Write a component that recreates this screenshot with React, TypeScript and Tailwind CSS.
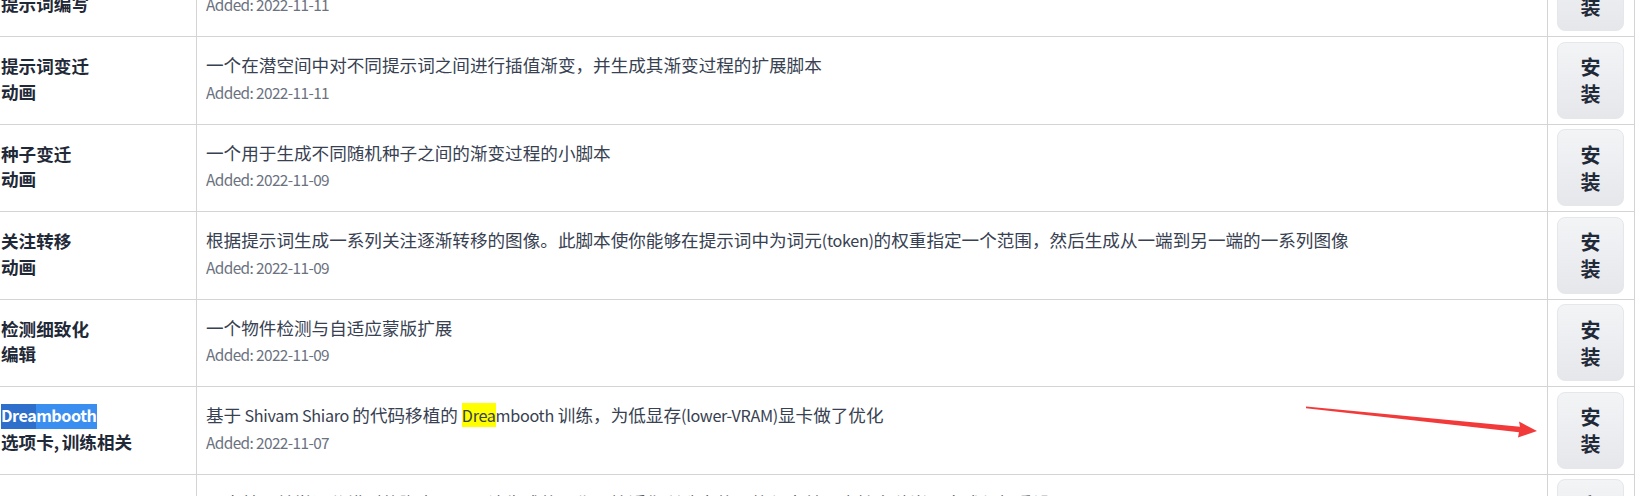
import React from "react";

type Row = {
  name: React.ReactNode;
  tags: React.ReactNode;
  desc: React.ReactNode;
  added: string;
};

// Latin runs are drawn a bit narrower so they match the reference's Source Sans widths
const L = ({ children, bold = false }: { children: React.ReactNode; bold?: boolean }) => (
  <span className={bold ? "text-[0.92em] tracking-[-0.03em]" : "text-[0.92em] tracking-[-0.02em]"}>{children}</span>
);

const ROWS: Row[] = [
  {
    name: "提示词矩阵",
    tags: "提示词编写",
    desc: "将多个提示词组合成网格图像，便于比较不同提示词的效果",
    added: "2022-11-11",
  },
  {
    name: "提示词变迁",
    tags: "动画",
    desc: "一个在潜空间中对不同提示词之间进行插值渐变，并生成其渐变过程的扩展脚本",
    added: "2022-11-11",
  },
  {
    name: "种子变迁",
    tags: "动画",
    desc: "一个用于生成不同随机种子之间的渐变过程的小脚本",
    added: "2022-11-09",
  },
  {
    name: "关注转移",
    tags: "动画",
    desc: (
      <>
        根据提示词生成一系列关注逐渐转移的图像。此脚本使你能够在提示词中为词元<L>(token)</L>的权重指定一个范围，然后生成从一端到另一端的一系列图像
      </>
    ),
    added: "2022-11-09",
  },
  {
    name: "检测细致化",
    tags: "编辑",
    desc: "一个物件检测与自适应蒙版扩展",
    added: "2022-11-09",
  },
  {
    name: (
      <span className="inline-flex h-[25px] items-center text-white">
        <span className="inline-flex h-[25px] items-center bg-[#2f6fcc]">
          <L bold>Drea</L>
        </span>
        <span className="inline-flex h-[25px] items-center bg-[#3a8ef0] pr-[1px]">
          <L bold>mbooth</L>
        </span>
      </span>
    ),
    tags: (
      <>
        选项卡<L bold>, </L>训练相关
      </>
    ),
    desc: (
      <>
        基于<L> Shivam Shiaro </L>的代码移植的{" "}
        <L>
          <mark className="bg-[#ffff00] text-[#374151]">Drea</mark>mbooth
        </L>{" "}
        训练，为低显存<L>(lower-VRAM)</L>显卡做了优化
      </>
    ),
    added: "2022-11-07",
  },
  {
    name: "美学渐变",
    tags: "脚本",
    desc: "一个基于美学评分模型的脚本，用于让生成的图像更接近你所选定的风格与审美，支持多种嵌入方式与权重设置",
    added: "2022-11-05",
  },
];

const InstallButton = () => (
  <button className="flex h-[77px] w-[67px] flex-col items-center justify-center rounded-lg border border-[#e5e7eb] bg-gradient-to-b from-[#f3f4f6] to-[#e5e7eb] text-[20px] font-bold leading-[27px] text-[#1f2937]">
    <span>安</span>
    <span>装</span>
  </button>
);

const Arrow = () => (
  <svg className="pointer-events-none absolute left-0 top-0" width="1647" height="496">
    <polygon
      points="1306,406.6 1520,426.8 1519,421.5 1537,431 1518,437.6 1519,432.2 1306,408.2"
      fill="#f23a3a"
    />
  </svg>
);

export default function App() {
  return (
    <div
      className="relative h-[496px] w-[1647px] overflow-hidden bg-white"
      style={{ fontFamily: '"Noto Sans CJK SC", "Noto Sans", sans-serif' }}
    >
      <div className="-mt-[50.5px] w-[1635px]">
        {ROWS.map((r, i) => (
          <div key={i} className="grid h-[87.5px] grid-cols-[197px_1351px_87px] border-b border-[#d4d4d4]">
            <div className="flex flex-col justify-center border-r border-[#d4d4d4] pb-[3px] pl-[1px] text-[17.6px] font-bold leading-[25.5px] text-[#1f2937]">
              <div>{r.name}</div>
              <div>{r.tags}</div>
            </div>
            <div className="flex flex-col justify-center border-r border-[#d4d4d4] pb-[3px] pl-[9px]">
              <div className="text-[17.6px] leading-[26.5px] text-[#374151]">{r.desc}</div>
              <div className="text-[15.4px] leading-[26.5px] tracking-[-0.6px] text-[#6b7280]">Added: {r.added}</div>
            </div>
            <div className="flex items-center border-r border-[#d4d4d4] pl-[9px]">
              <InstallButton />
            </div>
          </div>
        ))}
      </div>
      <Arrow />
    </div>
  );
}
